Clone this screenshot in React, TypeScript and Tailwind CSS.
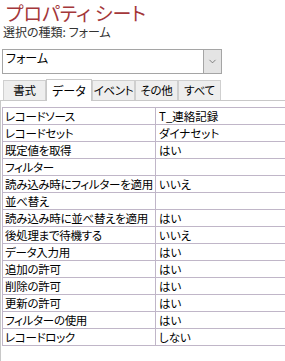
import { ChevronDown } from "lucide-react";

const rows: [string, string][] = [
	["レコードソース", "T_連絡記録"],
	["レコードセット", "ダイナセット"],
	["既定値を取得", "はい"],
	["フィルター", ""],
	["読み込み時にフィルターを適用", "いいえ"],
	["並べ替え", ""],
	["読み込み時に並べ替えを適用", "はい"],
	["後処理まで待機する", "いいえ"],
	["データ入力用", "はい"],
	["追加の許可", "はい"],
	["削除の許可", "はい"],
	["更新の許可", "はい"],
	["フィルターの使用", "はい"],
	["レコードロック", "しない"],
];

const tabs = ["書式", "データ", "イベント", "その他", "すべて"];

export default function App() {
	return (
		<div className="w-[285px] h-[361px] overflow-hidden bg-white text-black font-['Noto_Sans_CJK_JP',sans-serif] [font-feature-settings:'palt']">
			<div className="pl-[6px] pt-[3px] h-[24px] text-[19px] leading-[20px] text-[#a4373a] whitespace-nowrap">
				プロパティ シート
			</div>
			<div className="pl-[3px] text-[12px] leading-[16px] text-[#333]">
				選択の種類: フォーム
			</div>
			<div className="mt-[9px] ml-[2px] w-[220px] h-[25px] border border-[#a5a5a5] flex">
				<div className="flex-1 pl-[3px] text-[12px] leading-[16px]">フォーム</div>
				<div className="w-[18px] border-l border-[#a5a5a5] bg-[#e4e4e4] flex items-center justify-center">
					<ChevronDown size={11} strokeWidth={1.5} className="text-[#555]" />
				</div>
			</div>
			<div className="mt-[4px] ml-[3px] flex items-end h-[22px]">
				{tabs.map((t) => {
					const selected = t === "データ";
					return (
						<div
							key={t}
							className={
								selected
									? "h-[22px] w-[46px] border border-b-0 border-[#c8c8c8] bg-white flex items-center justify-center text-[12px] whitespace-nowrap -mb-px z-10 relative"
									: "h-[20px] w-[43px] border border-b-0 border-[#cfcfcf] bg-[#eeeeee] flex items-center justify-center text-[11.5px] tracking-[-0.3px] whitespace-nowrap"
							}
						>
							{t}
						</div>
					);
				})}
			</div>
			<div className="border-t border-l border-[#c8c8c8] h-[300px]">
				<div className="ml-[1px] mt-[6px] border-t border-l border-[#c0b6c8]">
					{rows.map(([k, v]) => (
						<div key={k} className="flex h-[17px] border-b border-[#c0b6c8] text-[11.5px] leading-[16px]">
							<div className="w-[153px] shrink-0 border-r border-[#c0b6c8] pl-[2px] whitespace-nowrap overflow-hidden tracking-[-0.3px]">
								{k}
							</div>
							<div className="flex-1 pl-[3px] whitespace-nowrap">{v}</div>
						</div>
					))}
				</div>
			</div>
		</div>
	);
}
